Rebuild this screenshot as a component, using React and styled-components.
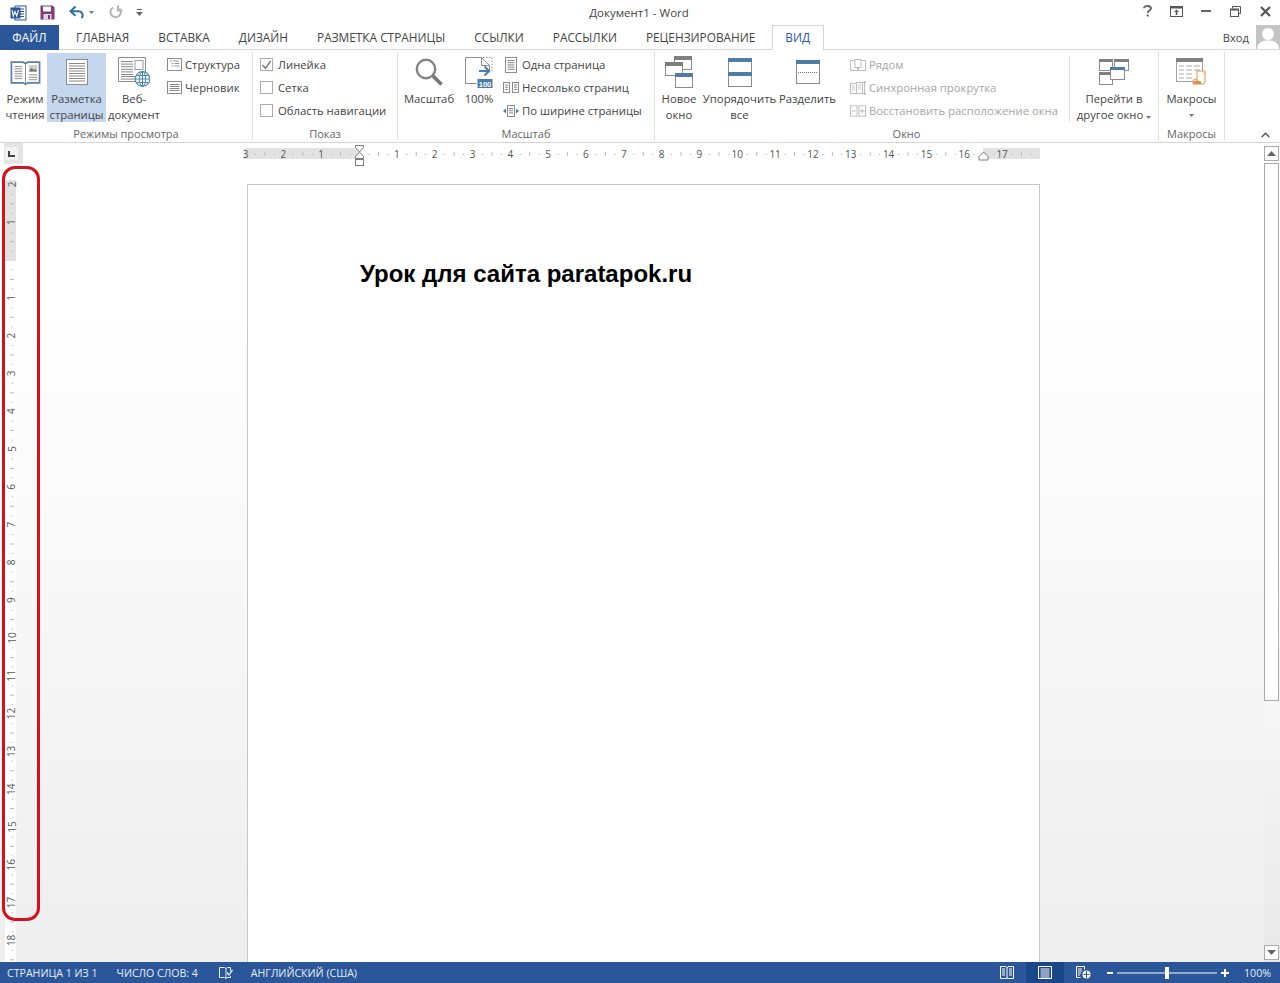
import React from "react";
import styled, { createGlobalStyle } from "styled-components";

const Global = createGlobalStyle`
  html, body { margin: 0; padding: 0; background: #fff; }
  * { box-sizing: border-box; }
  body { font-family: "Open Sans", "Noto Sans", sans-serif; color: #444; }
`;

const Window = styled.div`
  position: relative;
  width: 1280px;
  height: 983px;
  overflow: hidden;
  display: flex;
  flex-direction: column;
  background: #fff;
`;

/* Title bar */
const TitleBar = styled.div`
  height: 25px;
  display: grid;
  grid-template-columns: 1fr auto 1fr;
  align-items: center;
`;
const Qat = styled.div`
  display: flex;
  align-items: center;
  height: 25px;
  padding-left: 10px;
  gap: 0;
`;
const QatSlot = styled.span`
  display: flex;
  align-items: center;
  margin-left: ${(p) => p.$ml || 0}px;
`;
const DocTitle = styled.div`
  font-size: 11.5px;
  color: #444;
  margin-left: -2px;
  white-space: nowrap;
`;
const WinControls = styled.div`
  display: flex;
  justify-content: flex-end;
  align-items: center;
  height: 25px;
  margin-top: -3px;
`;
const WinBtn = styled.span`
  width: 29.5px;
  display: flex;
  justify-content: center;
  align-items: center;
`;

/* Tabs */
const TabBar = styled.div`
  height: 25px;
  display: flex;
  align-items: stretch;
  border-bottom: 1px solid #d4d4d4;
`;
const FileTab = styled.div`
  width: 59px;
  height: 25px;
  padding-bottom: 2px;
  background: #2b579a;
  color: #fff;
  font-size: 11.85px;
  display: flex;
  align-items: center;
  justify-content: center;
  margin-right: 2.5px;
`;
const Tab = styled.div`
  padding: 0 14.5px 2px;
  font-size: 11.85px;
  display: flex;
  align-items: center;
  white-space: nowrap;
  height: 25px;
  color: ${(p) => (p.$active ? "#2b579a" : "#444")};
  ${(p) =>
    p.$active
      ? `background:#fff; border:1px solid #d4d4d4; border-bottom:none; padding:0 12.5px 2px; margin-left:2px;`
      : ""}
`;
const Account = styled.div`
  margin-left: auto;
  display: flex;
  align-items: center;
  font-size: 11.2px;
  gap: 7px;
  height: 24px;
`;

/* Ribbon */
const Ribbon = styled.div`
  height: 93px;
  display: flex;
  position: relative;
  border-bottom: 1px solid #d4d4d4;
`;
const Group = styled.div`
  width: ${(p) => p.$w}px;
  height: 88px;
  margin-top: 2px;
  display: flex;
  flex-direction: column;
  border-right: 1px solid #e1e1e1;
`;
const GroupBody = styled.div`
  height: 70px;
  margin-top: 1px;
  display: flex;
  padding-left: ${(p) => p.$pl || 0}px;
`;
const GroupLabel = styled.div`
  margin-top: 5px;
  height: 14px;
  line-height: 14px;
  text-align: center;
  font-size: 11px;
  color: #666;
`;
const LargeBtn = styled.div`
  width: ${(p) => p.$w}px;
  height: 69px;
  display: flex;
  flex-direction: column;
  align-items: center;
  background: ${(p) => (p.$active ? "#c5d7ee" : "transparent")};
  flex: none;
`;
const IconSlot = styled.div`
  height: 38px;
  flex: none;
  display: flex;
  align-items: center;
  justify-content: center;
`;
const ChevronSlot = styled.div`
  height: 16px;
  flex: none;
  display: flex;
  align-items: center;
  justify-content: center;
`;
const BtnLabels = styled.div`
  flex: none;
`;
const BtnLabel = styled.div`
  font-size: 11.3px;
  line-height: 16px;
  text-align: center;
  white-space: nowrap;
  color: #444;
`;
const SmallList = styled.div`
  display: flex;
  flex-direction: column;
  margin-left: ${(p) => p.$ml || 0}px;
`;
const SmallRow = styled.div`
  height: 23px;
  display: flex;
  align-items: center;
  gap: ${(p) => (p.$gap === undefined ? 3 : p.$gap)}px;
  font-size: 11.3px;
  white-space: nowrap;
  color: ${(p) => (p.$disabled ? "#a6a6a6" : "#444")};
`;
const SmallIcon = styled.span`
  width: ${(p) => p.$w || 16}px;
  display: flex;
  justify-content: center;
  flex: none;
`;
const CheckBox = styled.span`
  width: 13px;
  height: 13px;
  border: 1px solid #ababab;
  background: #fff;
  display: flex;
  align-items: center;
  justify-content: center;
  flex: none;
`;
const InnerSep = styled.div`
  width: 1px;
  height: 66px;
  background: #e1e1e1;
  margin-left: auto;
  margin-top: 3px;
  flex: none;
`;
const Collapse = styled.span`
  position: absolute;
  right: 10px;
  bottom: 4px;
  display: flex;
`;

/* Workspace */
const Workspace = styled.div`
  flex: 1;
  min-height: 0;
  display: flex;
  background: linear-gradient(#fff 0%, #fff 20%, #eeeeee 100%);
  position: relative;
`;
const Main = styled.div`
  flex: 1;
  min-width: 0;
  display: flex;
  flex-direction: column;
`;
const TopRow = styled.div`
  height: 37px;
  display: flex;
  align-items: flex-start;
  flex: none;
`;
const Corner = styled.div`
  width: 19px;
  height: 21px;
  margin-left: 4px;
  padding: 4px 5px 4px 1px;
  background: #e4e4e4;
  display: flex;
  flex: none;
`;
const CornerInner = styled.div`
  flex: 1;
  background: #f2f2f2;
  display: flex;
  align-items: center;
  justify-content: center;
`;
const HRulerWrap = styled.div`
  margin-left: 217px;
  display: flex;
`;
const BodyRow = styled.div`
  flex: 1;
  min-height: 0;
  display: flex;
  overflow: hidden;
`;
const VRulerWrap = styled.div`
  width: 16px;
  margin-left: 5px;
  flex: none;
`;
const Page = styled.div`
  width: 793px;
  margin: 4px 0 0 226px;
  height: 900px;
  background: #fff;
  border: 1px solid #c6c6c6;
  padding: 75px 0 0 112px;
  flex: none;
`;
const Heading = styled.div`
  font-family: "Liberation Sans", Arial, sans-serif;
  font-weight: 700;
  font-size: 24px;
  line-height: 28px;
  color: #000;
  white-space: nowrap;
`;
const Scrollbar = styled.div`
  width: 16px;
  flex: none;
  display: flex;
  flex-direction: column;
  padding-top: 3px;
  background: linear-gradient(#fff 0%, #fff 50%, #e8e8e8 100%);
`;
const ScrollBtn = styled.div`
  height: 15px;
  width: 15px;
  background: #fff;
  border: 1px solid #ababab;
  display: flex;
  align-items: center;
  justify-content: center;
  flex: none;
  margin-bottom: ${(p) => p.$mb || 0}px;
`;
const ScrollThumb = styled.div`
  width: 15px;
  height: 538px;
  margin-top: 2px;
  background: #fff;
  border: 1px solid #ababab;
  flex: none;
`;
const Spacer = styled.div`
  flex: 1;
`;
const RedOutline = styled.div`
  position: absolute;
  left: 2px;
  top: 23px;
  width: 38px;
  height: 755px;
  border: 3px solid #cf1420;
  border-radius: 13px;
  pointer-events: none;
`;

/* Status bar */
const StatusBar = styled.div`
  height: 21px;
  background: #2b579a;
  display: flex;
  align-items: stretch;
  color: #e6ecf5;
  font-size: 10.6px;
  flex: none;
`;
const StatusText = styled.div`
  display: flex;
  align-items: center;
  white-space: nowrap;
  margin-left: ${(p) => p.$ml}px;
`;
const StatusRight = styled.div`
  margin-left: auto;
  display: flex;
  align-items: center;
  padding-right: 9px;
`;
const ViewBtn = styled.div`
  width: ${(p) => p.$w}px;
  height: 21px;
  margin-left: ${(p) => p.$ml || 0}px;
  display: flex;
  align-items: center;
  justify-content: center;
  background: ${(p) => (p.$active ? "#19478a" : "transparent")};
`;
const Zoomer = styled.div`
  display: flex;
  align-items: center;
  margin: 0 15px 0 10px;
`;

/* Icons */
const Lines = ({ x, y, w, n, step = 2.5, c = "#8a8a8a" }) => (
  <>
    {Array.from({ length: n }).map((_, i) => (
      <rect key={i} x={x} y={y + i * step} width={w} height="1" fill={c} />
    ))}
  </>
);

const WordLogo = () => (
  <svg width="17" height="16" viewBox="0 0 17 16">
    <rect x="5" y="1" width="11" height="14" fill="#fff" stroke="#2b579a" />
    <path d="M8 4h6M8 6.500h6M8 9h6M8 11.500h6" stroke="#2b579a" />
    <rect x="0.500" y="2.500" width="10" height="11" fill="#2b579a" />
    <path d="M2 5l1.300 6 1.700-4.500L6.700 11 8.500 5" stroke="#fff" strokeWidth="1.100" fill="none" />
  </svg>
);
const SaveIcon = () => (
  <svg width="15" height="15" viewBox="0 0 15 15">
    <path d="M.5.5h12l2 2v12H.5z" fill="#80397b" />
    <rect x="3" y="1.500" width="8" height="5" fill="#fff" />
    <rect x="3.500" y="9" width="8" height="5.500" fill="#e8d6e6" />
    <rect x="8" y="10" width="2" height="4" fill="#80397b" />
  </svg>
);
const UndoIcon = () => (
  <svg width="16" height="15" viewBox="0 0 16 15">
    <path d="M2.500 6.200h7a4 4 0 0 1 3 6.800" fill="none" stroke="#2f6ea5" strokeWidth="2" />
    <path d="M6.500 1.500L1.500 6.200l5 4.600" fill="none" stroke="#2f6ea5" strokeWidth="2" />
  </svg>
);
const RedoIcon = () => (
  <svg width="14" height="15" viewBox="0 0 14 15">
    <path d="M4 2.500a5.200 5.200 0 1 0 6.500 1" fill="none" stroke="#b5b5b5" strokeWidth="2" />
    <path d="M9 .5v5h4.500" fill="none" stroke="#b5b5b5" strokeWidth="2" />
  </svg>
);
const Caret = ({ c = "#777" }) => (
  <svg width="5" height="3" viewBox="0 0 5 3">
    <path d="M0 0h5L2.500 3z" fill={c} />
  </svg>
);
const QatMore = () => (
  <svg width="7" height="7" viewBox="0 0 7 7">
    <rect x="1" y="0" width="5" height="1" fill="#666" />
    <path d="M0 3h7L3.500 7z" fill="#666" />
  </svg>
);
const RibbonDisplay = () => (
  <svg width="13" height="11" viewBox="0 0 13 11">
    <rect x=".5" y=".5" width="12" height="10" fill="none" stroke="#555" />
    <rect x="1" y="1" width="11" height="1.500" fill="#555" />
    <path d="M6.500 3.500L9 6H7.300v3H5.700V6H4z" fill="#555" />
  </svg>
);
const ReadBook = () => (
  <svg width="31" height="27" viewBox="0 0 33 28">
    <path d="M1.500 3h12.500l2.500 1.500L19 3h12.500v22H19l-2.500 1.500L14 25H1.500z" fill="#fff" stroke="#5f7f9f" strokeWidth="1.800" />
    <path d="M16.500 4.500V26" stroke="#8b8b8b" />
    <Lines x={5} y={7} w={8} n={6} step={2.600} />
    <rect x="20" y="6" width="9" height="7" fill="#cfcfcf" />
    <path d="M20 13l3-4 2.500 2.500L27 10l2 3z" fill="#6f6f6f" />
    <Lines x={20} y={16} w={9} n={3} step={2.600} />
  </svg>
);
const PageIcon = () => (
  <svg width="22" height="26" viewBox="0 0 22 26">
    <rect x=".5" y=".5" width="21" height="25" fill="#fff" stroke="#8c8c8c" />
    <Lines x={3} y={4} w={16} n={8} step={2.500} c="#8a8a8a" />
  </svg>
);
const WebIcon = () => (
  <svg width="32" height="30" viewBox="0 0 32 30">
    <path d="M.5.5h27v24H.5z" fill="#fff" stroke="#8c8c8c" />
    <Lines x={3} y={4} w={12} n={6} step={2.600} />
    <rect x="17" y="3.500" width="8" height="9" fill="#fff" stroke="#9c9c9c" />
    <Lines x={3} y={19} w={14} n={2} step={2.600} />
    <circle cx="24.500" cy="22" r="7.300" fill="#fff" stroke="#4a86b5" strokeWidth="1.200" />
    <ellipse cx="24.500" cy="22" rx="3.200" ry="7.300" fill="none" stroke="#4a86b5" />
    <path d="M17.500 22h14M18.500 18.500h12M18.500 25.500h12M24.500 15v14" stroke="#4a86b5" fill="none" />
  </svg>
);
const OutlineIcon = () => (
  <svg width="15" height="13" viewBox="0 0 15 13">
    <rect x=".5" y=".5" width="14" height="12" fill="#fff" stroke="#8c8c8c" />
    <path d="M3 3h2M6 3h6M4.500 5.500h2M7.500 5.500h5M4.500 8h2M7.500 8h5" stroke="#999" />
  </svg>
);
const DraftIcon = () => (
  <svg width="15" height="13" viewBox="0 0 15 13">
    <rect x=".5" y=".5" width="14" height="12" fill="#fff" stroke="#8c8c8c" />
    <Lines x={2.500} y={3} w={10} n={4} step={2} c="#888" />
  </svg>
);
const Check = () => (
  <svg width="11" height="10" viewBox="0 0 11 10">
    <path d="M1.500 5l3 3.300L9.500 1" fill="none" stroke="#777" strokeWidth="1.400" />
  </svg>
);
const Magnifier = () => (
  <svg width="28" height="28" viewBox="0 0 28 28">
    <circle cx="11" cy="11" r="9.200" fill="#fff" stroke="#828282" strokeWidth="2.400" />
    <path d="M18 18l8.500 8.500" stroke="#777" strokeWidth="3.600" />
  </svg>
);
const Zoom100 = () => (
  <svg width="28" height="31" viewBox="0 0 28 31">
    <path d="M.5.5h16l8 8v6M.5.5v26h11" fill="#fff" stroke="#8c8c8c" />
    <path d="M16.500.5v8h8" fill="none" stroke="#8c8c8c" />
    <path d="M18 .5h9v14" fill="none" stroke="#999" strokeDasharray="1.500 1.500" />
    <path d="M14 14h10M19.500 9.500l4.700 4.500-4.700 4.500" fill="none" stroke="#4f7ba7" strokeWidth="2" />
    <rect x="12.500" y="22" width="15" height="9" fill="#4f7ba7" />
    <text x="20" y="29.500" textAnchor="middle" fontSize="7.500" fontWeight="700" fill="#fff" fontFamily="Liberation Sans, sans-serif">100</text>
  </svg>
);
const OnePage = () => (
  <svg width="12" height="16" viewBox="0 0 12 16">
    <rect x=".5" y=".5" width="11" height="15" fill="#fff" stroke="#8c8c8c" />
    <Lines x={2.500} y={3} w={7} n={5} step={2.200} c="#888" />
  </svg>
);
const MultiPage = () => (
  <svg width="16" height="11" viewBox="0 0 16 11">
    <rect x=".5" y=".5" width="6" height="10" fill="#fff" stroke="#8c8c8c" />
    <rect x="9.500" y=".5" width="6" height="10" fill="#fff" stroke="#8c8c8c" />
    <Lines x={2} y={2.500} w={3} n={3} step={2.200} c="#888" />
    <Lines x={11} y={2.500} w={3} n={3} step={2.200} c="#888" />
  </svg>
);
const FitWidth = () => (
  <svg width="16" height="12" viewBox="0 0 16 12">
    <rect x="4.500" y=".5" width="7" height="11" fill="#fff" stroke="#8c8c8c" />
    <Lines x={6} y={3} w={4} n={3} step={2.200} c="#888" />
    <path d="M3 3.500L0 6l3 2.500zM13 3.500L16 6l-3 2.500z" fill="#4f7ba7" />
  </svg>
);
const NewWindow = () => (
  <svg width="28" height="32" viewBox="0 0 28 32">
    <rect x="9.500" y=".5" width="17" height="13" fill="#fff" stroke="#8c8c8c" />
    <rect x="9" y="0" width="18" height="4" fill="#7f7f7f" />
    <rect x=".5" y="6.500" width="17" height="13" fill="#fff" stroke="#8c8c8c" />
    <rect x="0" y="6" width="18" height="4" fill="#7f7f7f" />
    <rect x="10.500" y="17.500" width="17" height="14" fill="#fff" stroke="#8c8c8c" />
    <rect x="10" y="17" width="18" height="4" fill="#4f7ba7" />
  </svg>
);
const Arrange = () => (
  <svg width="24" height="29" viewBox="0 0 24 29">
    <rect x=".5" y=".5" width="23" height="28" fill="#fff" stroke="#8c8c8c" />
    <rect x="0" y="0" width="24" height="4" fill="#4f7ba7" />
    <rect x="0" y="14" width="24" height="4" fill="#4f7ba7" />
  </svg>
);
const Split = () => (
  <svg width="24" height="24" viewBox="0 0 24 24">
    <rect x=".5" y=".5" width="23" height="23" fill="#fff" stroke="#8c8c8c" />
    <rect x="0" y="0" width="24" height="4" fill="#4f7ba7" />
    <path d="M2 12.500h20" stroke="#777" strokeDasharray="1 1" />
  </svg>
);
const SideBySide = () => (
  <svg width="16" height="12" viewBox="0 0 16 12">
    <path d="M.5 1.500h7v10h-7zM8.500 1.500h7v10h-7z" fill="#fff" stroke="#bdbdbd" />
    <rect x="5" y=".5" width="6" height="8" fill="#fff" stroke="#bdbdbd" />
  </svg>
);
const SyncScroll = () => (
  <svg width="16" height="14" viewBox="0 0 16 14">
    <rect x=".5" y="2.500" width="6" height="10" fill="#fff" stroke="#bdbdbd" />
    <rect x="6.500" y="1.500" width="6" height="11" fill="#fff" stroke="#bdbdbd" />
    <path d="M2 5h3M2 7h3M2 9h3M8 4h3M8 6h3M8 8h3" stroke="#c6c6c6" />
    <path d="M14.500 0v14M13 2l1.500-2L16 2M13 12l1.500 2 1.500-2" fill="none" stroke="#bdbdbd" />
  </svg>
);
const ResetPos = () => (
  <svg width="17" height="12" viewBox="0 0 17 12">
    <rect x=".5" y=".5" width="7" height="11" fill="#fff" stroke="#bdbdbd" />
    <rect x="9.500" y=".5" width="7" height="11" fill="#fff" stroke="#bdbdbd" />
    <path d="M2 6h4M13 3.500v5M10.500 6h5" stroke="#b5b5b5" />
  </svg>
);
const SwitchWin = () => (
  <svg width="30" height="26" viewBox="0 0 30 26">
    <rect x=".5" y=".5" width="13" height="11" fill="#fff" stroke="#8c8c8c" />
    <rect x="0" y="0" width="14" height="3" fill="#7f7f7f" />
    <rect x="15.500" y=".5" width="14" height="11" fill="#fff" stroke="#8c8c8c" />
    <rect x="15" y="0" width="15" height="3" fill="#7f7f7f" />
    <rect x=".5" y="13.500" width="13" height="12" fill="#fff" stroke="#8c8c8c" />
    <rect x="0" y="13" width="14" height="3" fill="#7f7f7f" />
    <rect x="11.500" y="8.500" width="14" height="12" fill="#fff" stroke="#8c8c8c" />
    <rect x="11" y="8" width="15" height="3" fill="#4f7ba7" />
  </svg>
);
const Macros = () => (
  <svg width="31" height="28" viewBox="0 0 31 28">
    <rect x=".5" y=".5" width="26" height="23" fill="#fff" stroke="#a0a0a0" />
    <rect x="0" y="0" width="27" height="4" fill="#7f7f7f" />
    <path d="M3 8h5M10 8h6M18 8h6M3 12h5M10 12h6M18 12h6M3 16h5M10 16h6M3 20h5M10 20h6" stroke="#aaa" />
    <path d="M21 13h8v11a2 2 0 0 1-2 2H17v-3a1 1 0 0 1 4 0z" fill="#fff" stroke="#e0904c" />
    <path d="M17 23h8v3H18z" fill="#e0904c" />
    <path d="M26 13h4v3h-2" fill="#f3c08e" />
  </svg>
);
const Avatar = () => (
  <svg width="24" height="24" viewBox="0 0 24 24">
    <rect width="24" height="24" fill="#c4c4c4" />
    <circle cx="12" cy="9" r="6" fill="#fff" />
    <path d="M1 24c0-6 5-8.500 11-8.500S23 18 23 24z" fill="#fff" />
  </svg>
);

const HRuler = () => {
  const o = 119;
  const u = 37.83;
  const marks = [];
  for (let n = -3.25; n <= 18; n += 0.25) {
    const x = o + n * u;
    if (x < 4 || x > 798) continue;
    const whole = Number.isInteger(n);
    if (whole) {
      if (n === 0) continue;
      marks.push(
        <text key={n} x={x} y={15} textAnchor="middle" fontSize="10" fill="#555" fontFamily="Open Sans, sans-serif">
          {Math.abs(n)}
        </text>
      );
    } else if (n * 2 === Math.round(n * 2)) {
      marks.push(<rect key={n} x={x} y={9} width="1" height="4" fill="#bbb" />);
    } else {
      marks.push(<rect key={n} x={x} y={11} width="1" height="1" fill="#aaa" />);
    }
  }
  return (
    <svg width="810" height="27" viewBox="0 0 810 27">
      <rect x="4" y="5" width="796" height="11" fill="#fff" />
      <rect x="4" y="5" width="114" height="11" fill="#e2e2e2" />
      <rect x="743" y="5" width="57" height="11" fill="#e2e2e2" />
      {marks}
      <path d="M115.500 2.500h8v2l-4 4.500-4-4.500zM119.500 9l4 4.500v2h-8v-2z" fill="#fff" stroke="#7d7d7d" />
      <rect x="115.500" y="16.500" width="8" height="6" fill="#fff" stroke="#7d7d7d" />
      <path d="M739 13.500l4.500-4.500 4.500 4.500v3.500h-9z" fill="#fff" stroke="#7d7d7d" />
    </svg>
  );
};

const VRuler = () => {
  const o = 80;
  const u = 37.8;
  const marks = [];
  for (let n = -2; n <= 19; n += 0.25) {
    const y = o + n * u;
    if (y < 0 || y > 782) continue;
    const whole = Number.isInteger(n);
    if (whole) {
      if (n === 0) continue;
      marks.push(
        <text key={n} x={7} y={y} transform={`rotate(-90 7 ${y})`} dy="3.500" textAnchor="middle" fontSize="10" fill="#555" fontFamily="Open Sans, sans-serif">
          {Math.abs(n)}
        </text>
      );
    } else if (n * 2 === Math.round(n * 2)) {
      marks.push(<rect key={n} x={5} y={y} width="4" height="1" fill="#bbb" />);
    } else {
      marks.push(<rect key={n} x={7} y={y} width="1" height="1" fill="#aaa" />);
    }
  }
  return (
    <svg width="12" height="782" viewBox="0 0 12 782">
      <rect width="11" height="782" fill="#fff" />
      <rect width="11" height="81" fill="#e2e2e2" />
      {marks}
    </svg>
  );
};

const large = (w, icon, lines, active, extra) => (
  <LargeBtn $w={w} $active={active}>
    <IconSlot>{icon}</IconSlot>
    <BtnLabels>
      {lines.map((l, i) => (
        <BtnLabel key={i}>{l}</BtnLabel>
      ))}
    </BtnLabels>
    {extra}
  </LargeBtn>
);

export default function App() {
  return (
    <Window>
      <Global />
      <TitleBar>
        <Qat>
          <QatSlot><WordLogo /></QatSlot>
          <QatSlot $ml={13}><SaveIcon /></QatSlot>
          <QatSlot $ml={14}><UndoIcon /></QatSlot>
          <QatSlot $ml={4}><Caret /></QatSlot>
          <QatSlot $ml={15}><RedoIcon /></QatSlot>
          <QatSlot $ml={13}><QatMore /></QatSlot>
        </Qat>
        <DocTitle>Документ1 - Word</DocTitle>
        <WinControls>
          <WinBtn>
            <svg width="9" height="12" viewBox="0 0 9 12"><path d="M1 3.200C1 1.500 2.500 1 4.300 1 6.300 1 8 1.800 8 3.500c0 2-3.300 2.200-3.300 4.500" fill="none" stroke="#666" strokeWidth="1.800"/><rect x="3.700" y="9.500" width="2" height="2" fill="#666"/></svg>
          </WinBtn>
          <WinBtn><RibbonDisplay /></WinBtn>
          <WinBtn><svg width="10" height="2" viewBox="0 0 10 2"><rect width="10" height="2" fill="#666"/></svg></WinBtn>
          <WinBtn>
            <svg width="11" height="11" viewBox="0 0 11 11"><path d="M2.500 2.500V.5h8v7h-2" fill="none" stroke="#555"/><rect x=".5" y="3" width="8" height="7.500" fill="#fff" stroke="#555"/><rect x="1" y="3" width="7" height="1.500" fill="#555"/></svg>
          </WinBtn>
          <WinBtn>
            <svg width="11" height="11" viewBox="0 0 11 11"><path d="M1 1l9 9M10 1l-9 9" stroke="#555" strokeWidth="2.200"/></svg>
          </WinBtn>
        </WinControls>
      </TitleBar>

      <TabBar>
        <FileTab>ФАЙЛ</FileTab>
        <Tab>ГЛАВНАЯ</Tab>
        <Tab>ВСТАВКА</Tab>
        <Tab>ДИЗАЙН</Tab>
        <Tab>РАЗМЕТКА СТРАНИЦЫ</Tab>
        <Tab>ССЫЛКИ</Tab>
        <Tab>РАССЫЛКИ</Tab>
        <Tab>РЕЦЕНЗИРОВАНИЕ</Tab>
        <Tab $active>ВИД</Tab>
        <Account>
          Вход
          <Avatar />
        </Account>
      </TabBar>

      <Ribbon>
        <Group $w={253}>
          <GroupBody $pl={3}>
            {large(44, <ReadBook />, ["Режим", "чтения"])}
            {large(59, <PageIcon />, ["Разметка", "страницы"], true)}
            {large(56, <WebIcon />, ["Веб-", "документ"])}
            <SmallList $ml={4}>
              <SmallRow><SmallIcon><OutlineIcon /></SmallIcon>Структура</SmallRow>
              <SmallRow><SmallIcon><DraftIcon /></SmallIcon>Черновик</SmallRow>
            </SmallList>
          </GroupBody>
          <GroupLabel>Режимы просмотра</GroupLabel>
        </Group>

        <Group $w={145}>
          <GroupBody $pl={7}>
            <SmallList>
              <SmallRow $gap={5}><CheckBox><Check /></CheckBox>Линейка</SmallRow>
              <SmallRow $gap={5}><CheckBox />Сетка</SmallRow>
              <SmallRow $gap={5}><CheckBox />Область навигации</SmallRow>
            </SmallList>
          </GroupBody>
          <GroupLabel>Показ</GroupLabel>
        </Group>

        <Group $w={257}>
          <GroupBody $pl={2}>
            {large(58, <Magnifier />, ["Масштаб"])}
            {large(42, <Zoom100 />, ["100%"])}
            <SmallList $ml={3}>
              <SmallRow><SmallIcon><OnePage /></SmallIcon>Одна страница</SmallRow>
              <SmallRow><SmallIcon><MultiPage /></SmallIcon>Несколько страниц</SmallRow>
              <SmallRow><SmallIcon><FitWidth /></SmallIcon>По ширине страницы</SmallRow>
            </SmallList>
          </GroupBody>
          <GroupLabel>Масштаб</GroupLabel>
        </Group>

        <Group $w={504}>
          <GroupBody $pl={1}>
            {large(46, <NewWindow />, ["Новое", "окно"])}
            {large(75, <Arrange />, ["Упорядочить", "все"])}
            {large(61, <Split />, ["Разделить"])}
            <SmallList $ml={12}>
              <SmallRow $disabled><SmallIcon><SideBySide /></SmallIcon>Рядом</SmallRow>
              <SmallRow $disabled><SmallIcon><SyncScroll /></SmallIcon>Синхронная прокрутка</SmallRow>
              <SmallRow $disabled><SmallIcon><ResetPos /></SmallIcon>Восстановить расположение окна</SmallRow>
            </SmallList>
            <InnerSep />
            {large(88, <SwitchWin />, ["Перейти в", <React.Fragment key="d">другое окно <Caret /></React.Fragment>])}
          </GroupBody>
          <GroupLabel>Окно</GroupLabel>
        </Group>

        <Group $w={66}>
          <GroupBody>
            {large(65, <Macros />, ["Макросы"], false, <ChevronSlot><Caret /></ChevronSlot>)}
          </GroupBody>
          <GroupLabel>Макросы</GroupLabel>
        </Group>

        <Collapse>
          <svg width="9" height="6" viewBox="0 0 9 6"><path d="M.8 5l3.700-3.700L8.200 5" fill="none" stroke="#555" strokeWidth="1.500"/></svg>
        </Collapse>
      </Ribbon>

      <Workspace>
        <Main>
          <TopRow>
            <Corner>
              <CornerInner>
                <svg width="7" height="6" viewBox="0 0 7 6"><path d="M0 0h2v4h5v2H0z" fill="#444"/></svg>
              </CornerInner>
            </Corner>
            <HRulerWrap><HRuler /></HRulerWrap>
          </TopRow>
          <BodyRow>
            <VRulerWrap><VRuler /></VRulerWrap>
            <Page>
              <Heading>Урок для сайта paratapok.ru</Heading>
            </Page>
          </BodyRow>
        </Main>
        <Scrollbar>
          <ScrollBtn>
            <svg width="9" height="5" viewBox="0 0 9 5"><path d="M0 5h9L4.500 0z" fill="#666"/></svg>
          </ScrollBtn>
          <ScrollThumb />
          <Spacer />
          <ScrollBtn $mb={2}>
            <svg width="9" height="5" viewBox="0 0 9 5"><path d="M0 0h9L4.500 5z" fill="#666"/></svg>
          </ScrollBtn>
        </Scrollbar>
        <RedOutline />
      </Workspace>

      <StatusBar>
        <StatusText $ml={7}>СТРАНИЦА 1 ИЗ 1</StatusText>
        <StatusText $ml={19}>ЧИСЛО СЛОВ: 4</StatusText>
        <StatusText $ml={21}>
          <svg width="14" height="14" viewBox="0 0 14 14"><path d="M.5 1.500h5l1.500 1v10l-1.500-1h-5z" fill="none" stroke="#e6ecf5"/><path d="M7 2.500l1.500-1h3v4M11.500 10v1.500h-3l-1.500 1" fill="none" stroke="#e6ecf5"/><path d="M8 6.500l2 2.500 3.500-5" fill="none" stroke="#e6ecf5" strokeWidth="1.300"/></svg>
        </StatusText>
        <StatusText $ml={18}>АНГЛИЙСКИЙ (США)</StatusText>
        <StatusRight>
          <ViewBtn $w={14}>
            <svg width="14" height="13" viewBox="0 0 14 13"><path d="M.5.5h5.500l1 1 1-1h5.500v12H8l-1-.5-1 .5H.5z" fill="none" stroke="#fff"/><path d="M2 3h3M2 5h3M2 7h3M2 9h3M9 3h3M9 5h3M9 7h3M9 9h3M7 1v11" stroke="#fff"/></svg>
          </ViewBtn>
          <ViewBtn $w={38} $active $ml={12}>
            <svg width="14" height="13" viewBox="0 0 14 13"><rect x=".5" y=".5" width="13" height="12" fill="none" stroke="#fff"/><path d="M2.500 3h9M2.500 5h9M2.500 7h9M2.500 9h9M2.500 11h9" stroke="#fff"/></svg>
          </ViewBtn>
          <ViewBtn $w={15} $ml={12}>
            <svg width="15" height="13" viewBox="0 0 15 13"><path d="M.5.5h8v3M.5.5v11h4" fill="none" stroke="#fff"/><path d="M2 3h4M2 5h4M2 7h3M2 9h2" stroke="#fff"/><circle cx="10.500" cy="8.500" r="4" fill="#fff"/><path d="M7.500 8.500h6M10.500 5v7" stroke="#2b579a"/></svg>
          </ViewBtn>
          <Zoomer>
            <svg width="128" height="14" viewBox="0 0 128 14">
              <rect x="6" y="6" width="6" height="2" fill="#fff" />
              <rect x="16" y="6.500" width="100" height="1" fill="#fff" />
              <rect x="64" y="1" width="4" height="12" fill="#fff" />
              <path d="M120 7h8M124 3v8" stroke="#fff" strokeWidth="2" />
            </svg>
          </Zoomer>
          <span>100%</span>
        </StatusRight>
      </StatusBar>
    </Window>
  );
}
